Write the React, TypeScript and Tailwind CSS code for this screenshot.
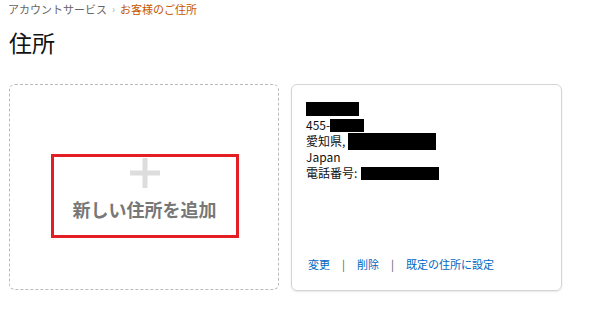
const FONT = { fontFamily: '"Noto Sans CJK JP", "Noto Sans", sans-serif' }

const Redact = ({ w, h }: { w: number; h: number }) => (
  <span className="inline-block bg-black align-middle" style={{ width: w, height: h }} />
)

export default function App() {
  return (
    <div className="w-[598px] h-[324px] bg-white pl-[8px] pt-[1px] text-[#111]" style={FONT}>
      <div className="flex items-center h-[16px] text-[11px] leading-[16px]">
        <span className="text-[#666]">アカウントサービス</span>
        <span className="text-[#aaa] text-[10px] mx-[5px]">›</span>
        <span className="text-[#c45500]">お客様のご住所</span>
      </div>
      <h1 className="mt-[9px] h-[32px] text-[23px] leading-[32px] font-normal text-[#111] pl-[1px]">住所</h1>

      <div className="flex gap-[12px] mt-[26px] pl-[1px]">
        <div className="w-[270px] h-[206px] rounded-[6px] border border-dashed border-[#bbb] flex items-center justify-center">
          <div className="w-[188px] h-[84px] border-[3px] border-[#e31e24] flex flex-col items-center justify-start mt-[18px] ml-[1px]">
            <svg width="32" height="32" viewBox="0 0 32 32" className="block">
              <rect x="13.5" y="1" width="5" height="30" fill="#ddd" />
              <rect x="1" y="13.5" width="30" height="5" fill="#ddd" />
            </svg>
            <span className="mt-[8px] text-[18px] leading-[24px] font-bold text-[#777]">新しい住所を追加</span>
          </div>
        </div>

        <div className="w-[271px] h-[207px] rounded-[6px] border border-[#d5d5d5] shadow-[0_1px_2px_rgba(0,0,0,0.1)] px-[14px] pt-[16px] pb-[18px] flex flex-col text-[12px] leading-[16px]">
          <div className="h-[16px] flex items-center">
            <Redact w={53} h={14} />
          </div>
          <div className="h-[16px] flex items-center">
            <span>455-</span>
            <Redact w={34} h={13} />
          </div>
          <div className="h-[16px] flex items-center">
            <span>愛知県,</span>
            <span className="ml-[3px] flex"><Redact w={88} h={17} /></span>
          </div>
          <div className="h-[16px] flex items-center">Japan</div>
          <div className="h-[16px] flex items-center">
            <span>電話番号:</span>
            <span className="ml-[4px] flex"><Redact w={78} h={13} /></span>
          </div>
          <div className="mt-auto flex items-center text-[#0066c0] text-[11px] leading-[16px] pl-[2px]">
            <span>変更</span>
            <span className="text-[#555] mx-[12px]">|</span>
            <span>削除</span>
            <span className="text-[#555] mx-[12px]">|</span>
            <span>既定の住所に設定</span>
          </div>
        </div>
      </div>
    </div>
  )
}
